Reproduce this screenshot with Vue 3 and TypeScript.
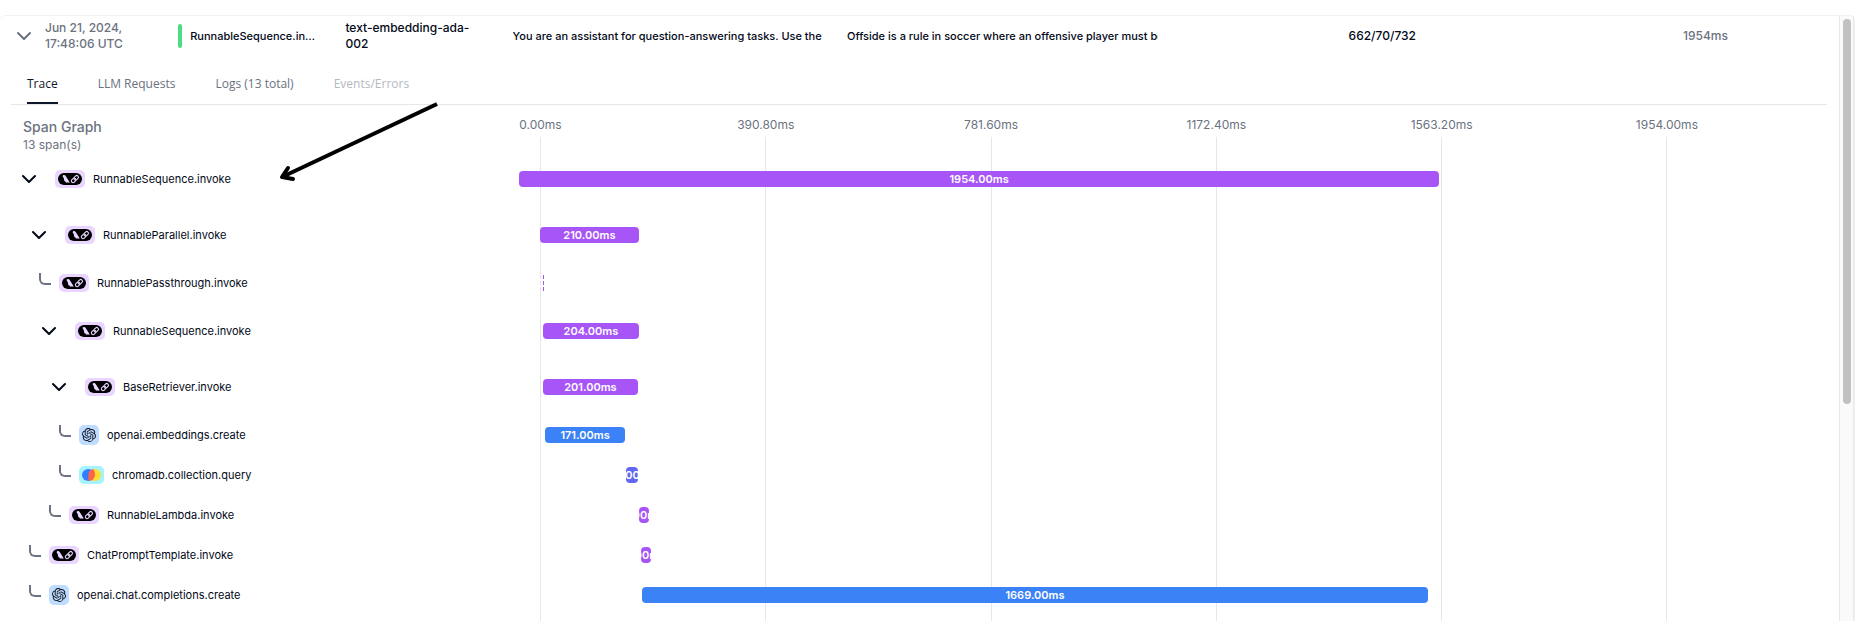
<script setup lang="ts">
import { ref } from 'vue'

type Vendor = 'langchain' | 'openai' | 'chroma'

interface Span {
  name: string
  vendor: Vendor
  depth: number
  parent: boolean
  start: number
  width: number
  label: string
}

const tabs = [
  { label: 'Trace', disabled: false },
  { label: 'LLM Requests', disabled: false },
  { label: 'Logs (13 total)', disabled: false },
  { label: 'Events/Errors', disabled: true },
]
const activeTab = ref('Trace')

const ticks = ['0.00ms', '390.80ms', '781.60ms', '1172.40ms', '1563.20ms', '1954.00ms']

// start and width are percentages of the chart's width
const spans: Span[] = [
  { name: 'RunnableSequence.invoke', vendor: 'langchain', depth: 0, parent: true, start: 0, width: 70.35, label: '1954.00ms' },
  { name: 'RunnableParallel.invoke', vendor: 'langchain', depth: 1, parent: true, start: 1.6, width: 7.57, label: '210.00ms' },
  { name: 'RunnablePassthrough.invoke', vendor: 'langchain', depth: 2, parent: false, start: 1.6, width: 0, label: '' },
  { name: 'RunnableSequence.invoke', vendor: 'langchain', depth: 2, parent: true, start: 1.83, width: 7.34, label: '204.00ms' },
  { name: 'BaseRetriever.invoke', vendor: 'langchain', depth: 3, parent: true, start: 1.83, width: 7.26, label: '201.00ms' },
  { name: 'openai.embeddings.create', vendor: 'openai', depth: 4, parent: false, start: 1.99, width: 6.12, label: '171.00ms' },
  { name: 'chromadb.collection.query', vendor: 'chroma', depth: 4, parent: false, start: 8.18, width: 0.92, label: '24.00ms' },
  { name: 'RunnableLambda.invoke', vendor: 'langchain', depth: 3, parent: false, start: 9.17, width: 0.77, label: '1.00ms' },
  { name: 'ChatPromptTemplate.invoke', vendor: 'langchain', depth: 1, parent: false, start: 9.33, width: 0.77, label: '1.00ms' },
  { name: 'openai.chat.completions.create', vendor: 'openai', depth: 1, parent: false, start: 9.4, width: 60.1, label: '1669.00ms' },
]
</script>

<template>
  <main class="page">
    <section class="panel">
      <div class="content">
        <div class="summary">
          <div class="cell time">
            <button class="toggle muted" aria-label="Collapse trace">
              <svg width="14" height="14" viewBox="0 0 14 14"><path d="M1 4l6 6 6-6" /></svg>
            </button>
            <span>Jun 21, 2024,<br />17:48:06 UTC</span>
          </div>
          <div class="cell name"><i class="status"></i><span>RunnableSequence.in…</span></div>
          <div class="cell"><span>text-embedding-ada-<br />002</span></div>
          <div class="cell"><span class="clip">You are an assistant for question-answering tasks. Use the</span></div>
          <div class="cell"><span class="clip">Offside is a rule in soccer where an offensive player must be</span></div>
          <div class="cell"><span>662/70/732</span></div>
          <div class="cell latency"><span>1954ms</span></div>
        </div>

        <nav class="tabs" role="tablist">
          <button
            v-for="tab in tabs"
            :key="tab.label"
            role="tab"
            class="tab"
            :class="{ active: tab.label === activeTab }"
            :aria-selected="tab.label === activeTab"
            :disabled="tab.disabled"
            @click="activeTab = tab.label"
          >{{ tab.label }}</button>
        </nav>

        <div class="graph">
          <header class="graph-head">
            <h2>Span Graph</h2>
            <p>13 span(s)</p>
          </header>

          <div class="axis">
            <div v-for="tick in ticks" :key="tick" class="tick">
              <span>{{ tick }}</span>
              <i></i>
            </div>
          </div>

          <div class="rows">
            <div v-for="(span, i) in spans" :key="i" class="row" :class="{ parent: span.parent }">
              <div class="label" :style="{ paddingLeft: span.depth * 10 + 'px' }">
                <button v-if="span.parent" class="toggle" :aria-label="'Collapse ' + span.name">
                  <svg width="14" height="14" viewBox="0 0 14 14"><path d="M1 4l6 6 6-6" /></svg>
                </button>
                <i v-else class="elbow"></i>

                <span class="badge" :class="span.vendor">
                  <svg v-if="span.vendor === 'langchain'" width="24" height="12" viewBox="0 0 24 12">
                    <rect width="24" height="12" rx="6" fill="#000" />
                    <path d="M5 2.2c1.200-.5 2.200-.1 2.700.8l2.700 4.200c.5.8.4 1.500 1.400 2l-.9.5-1.300-.4-.6.7-.8-.8C6.400 8.600 5.900 7.300 5.900 5.500L4.600 3.200z" fill="#e9d5ff" />
                    <g fill="none" stroke="#e9d5ff" stroke-width="1.100" transform="rotate(-45 17 6)">
                      <rect x="12.600" y="4.300" width="5" height="3.400" rx="1.700" />
                      <rect x="16.200" y="4.300" width="5" height="3.400" rx="1.700" />
                    </g>
                  </svg>
                  <svg v-else-if="span.vendor === 'openai'" width="14" height="14" viewBox="0 0 24 24">
                    <path fill="#0b1220" d="M22.2819 9.8211a5.9847 5.9847 0 0 0-.5157-4.9108 6.0462 6.0462 0 0 0-6.5098-2.9A6.0651 6.0651 0 0 0 4.9807 4.1818a5.9847 5.9847 0 0 0-3.9977 2.9 6.0462 6.0462 0 0 0 .7427 7.0966 5.98 5.98 0 0 0 .511 4.9107 6.051 6.051 0 0 0 6.5146 2.9001A5.9847 5.9847 0 0 0 13.2599 24a6.0557 6.0557 0 0 0 5.7718-4.2058 5.9894 5.9894 0 0 0 3.9977-2.9001 6.0557 6.0557 0 0 0-.7475-7.0729zm-9.022 12.6081a4.4755 4.4755 0 0 1-2.8764-1.0408l.1419-.0804 4.7783-2.7582a.7948.7948 0 0 0 .3927-.6813v-6.7369l2.02 1.1686a.071.071 0 0 1 .038.052v5.5826a4.504 4.504 0 0 1-4.4945 4.4944zm-9.6607-4.1254a4.4708 4.4708 0 0 1-.5346-3.0137l.142.0852 4.783 2.7582a.7712.7712 0 0 0 .7806 0l5.8428-3.3685v2.3324a.0804.0804 0 0 1-.0332.0615L9.74 19.9502a4.4992 4.4992 0 0 1-6.1408-1.6464zM2.3408 7.8956a4.485 4.485 0 0 1 2.3655-1.9728V11.6a.7664.7664 0 0 0 .3879.6765l5.8144 3.3543-2.0201 1.1685a.0757.0757 0 0 1-.071 0l-4.8303-2.7865A4.504 4.504 0 0 1 2.3408 7.872zm16.5963 3.8558L13.1038 8.364 15.1192 7.2a.0757.0757 0 0 1 .071 0l4.8303 2.7913a4.4944 4.4944 0 0 1-.6765 8.1042v-5.6772a.79.79 0 0 0-.407-.667zm2.0107-3.0231l-.142-.0852-4.7735-2.7818a.7759.7759 0 0 0-.7854 0L9.409 9.2297V6.8974a.0662.0662 0 0 1 .0284-.0615l4.8303-2.7866a4.4992 4.4992 0 0 1 6.6802 4.66zM8.3065 12.863l-2.02-1.1638a.0804.0804 0 0 1-.038-.0567V6.0742a4.4992 4.4992 0 0 1 7.3757-3.4537l-.142.0805L8.704 5.459a.7948.7948 0 0 0-.3927.6813zm1.0976-2.3654l2.602-1.4998 2.6069 1.4998v2.9994l-2.5974 1.4997-2.6067-1.4997Z" />
                  </svg>
                  <svg v-else width="19" height="12" viewBox="0 0 19 12">
                    <ellipse cx="12.700" cy="6" rx="6.300" ry="6" fill="#ffde2d" />
                    <ellipse cx="6.300" cy="6" rx="6.300" ry="6" fill="#327eff" />
                    <path d="M6.400 12V6.200C6.400 2.900 8.400 .6 11 0c1.200 1 1.900 3.200 1.900 5.800C12.900 9.200 9.800 12 6.400 12z" fill="#ff6446" />
                  </svg>
                </span>
                <span class="span-name">{{ span.name }}</span>
              </div>

              <div class="track">
                <div
                  v-if="span.width"
                  class="bar"
                  :class="span.vendor"
                  :style="{ marginLeft: span.start + '%', width: span.width + '%' }"
                ><span>{{ span.label }}</span></div>
                <div v-else class="sliver" :style="{ marginLeft: span.start + '%' }"></div>
              </div>
            </div>
          </div>
        </div>
      </div>

      <div class="scrollbar"><div class="thumb"></div></div>
    </section>

    <svg class="pointer" width="164" height="84" viewBox="0 0 164 84">
      <path d="M160 4L5 77" />
      <path d="M11 68L5 77l11 2" stroke-linecap="round" stroke-linejoin="round" />
    </svg>
  </main>
</template>

<style>
body {
  background: #fff;
}
</style>

<style scoped>
* {
  box-sizing: border-box;
}

.page {
  position: relative;
  height: 100vh;
  padding: 15px 15px 0 0;
  overflow: hidden;
  font-family: Inter, 'Open Sans', sans-serif;
  font-size: 12px;
  line-height: 16px;
  color: #020817;
}

.panel {
  display: flex;
  height: 100%;
  border: 1px solid #f1f1f2;
  border-width: 1px 1px 0 0;
  border-radius: 6px 6px 0 0;
}

.content {
  display: flex;
  flex: 1;
  flex-direction: column;
  min-width: 0;
  padding-left: 11px;
}

button {
  padding: 0;
  border: 0;
  background: none;
  font: inherit;
  color: inherit;
  cursor: pointer;
}

.summary {
  display: grid;
  flex: none;
  grid-template-columns: repeat(3, minmax(0, 1fr)) minmax(0, 2fr) minmax(0, 3fr) minmax(0, 2fr) 156px;
  height: 40px;
  font-weight: 500;
}

.cell {
  display: flex;
  align-items: center;
  white-space: nowrap;
}

.time {
  gap: 14px;
  padding-left: 6px;
  color: #6b7280;
}

.name {
  gap: 8px;
}

.name,
.clip,
.span-name {
  font-size: 11px;
}

.status {
  width: 4px;
  height: 24px;
  border-radius: 2px;
  background: #4ade80;
}

.clip {
  width: 311px;
  overflow: hidden;
}

.latency {
  color: #6b7280;
}

.toggle {
  display: flex;
  flex: none;
}

.toggle path {
  fill: none;
  stroke: #020817;
  stroke-width: 2;
  stroke-linecap: round;
  stroke-linejoin: round;
}

.toggle.muted path {
  stroke: #6b7280;
}

.tabs {
  display: flex;
  flex: none;
  gap: 40px;
  height: 49px;
  margin-right: 12px;
  padding: 10px 16px 0;
  border-bottom: 1px solid #e5e7eb;
}

.tab {
  border-bottom: 2px solid transparent;
  font-family: 'Open Sans', 'Noto Sans', sans-serif;
  font-weight: 500;
  color: #6b7280;
}

.tab.active {
  border-color: #0f172a;
  color: #0f172a;
}

.tab:disabled {
  color: #b5b8bf;
}

.graph {
  display: grid;
  flex: 1;
  grid-template-columns: 508px minmax(0, 1fr);
  grid-template-rows: 46px 1fr;
  margin-right: 12px;
}

.graph-head {
  padding: 12px 0 0 12px;
  color: #6b7280;
}

.graph-head h2 {
  margin: 0;
  font-size: 14px;
  font-weight: 500;
  line-height: 20px;
}

.graph-head p {
  margin: 0;
}

.axis {
  grid-column: 2;
  grid-row: 1 / 3;
  display: flex;
  justify-content: space-between;
  margin: 12px 12.2% 0 1.6%;
  color: #6b7280;
}

.tick {
  display: flex;
  flex-direction: column;
  align-items: center;
  gap: 4px;
  width: 1px;
}

.tick i {
  flex: 1;
  width: 1px;
  background: #e5e7eb;
}

.rows {
  grid-column: 1 / 3;
  grid-row: 2;
  z-index: 1;
}

.row {
  display: grid;
  grid-template-columns: 508px minmax(0, 1fr);
  align-items: center;
  height: 40px;
}

.row.parent {
  height: 56px;
}

.label {
  display: flex;
  align-items: center;
  height: 20px;
  margin-left: 11px;
}

.label .toggle {
  margin-right: 19px;
}

.elbow {
  align-self: flex-start;
  width: 12px;
  height: 12px;
  margin: 0 8px 0 -3px;
  border: solid #6b7280;
  border-width: 0 0 2px 2px;
  border-bottom-left-radius: 6px;
}

.badge {
  display: flex;
  flex: none;
  margin-right: 8px;
  padding: 3px;
  border-radius: 5px;
}

.badge.langchain {
  background: #e9d5ff;
}

.badge.openai {
  background: #bfdbfe;
}

.badge.chroma {
  background: #a5f3fc;
}

.bar {
  display: flex;
  justify-content: center;
  height: 16px;
  border-radius: 4px;
  overflow: hidden;
  color: #fff;
  font-size: 11px;
  font-weight: 600;
}

.bar.langchain {
  background: #a855f7;
}

.bar.openai {
  background: #3b82f6;
}

.bar.chroma {
  background: #6366f1;
}

.sliver {
  width: 4px;
  height: 16px;
  background:
    repeating-linear-gradient(transparent 0 4px, #fff 4px 6px),
    linear-gradient(#a855f7, #a855f7) right / 1px 100% no-repeat;
}

.scrollbar {
  width: 15px;
  padding: 3px 3px 0;
  border: solid #e8e8e8;
  border-width: 0 1px;
  background: #fafafa;
}

.thumb {
  width: 8px;
  height: 64%;
  border-radius: 4px;
  background: #c1c1c1;
}

.pointer {
  position: absolute;
  left: 277px;
  top: 100px;
  fill: none;
  stroke: #000;
  stroke-width: 4;
}
</style>
